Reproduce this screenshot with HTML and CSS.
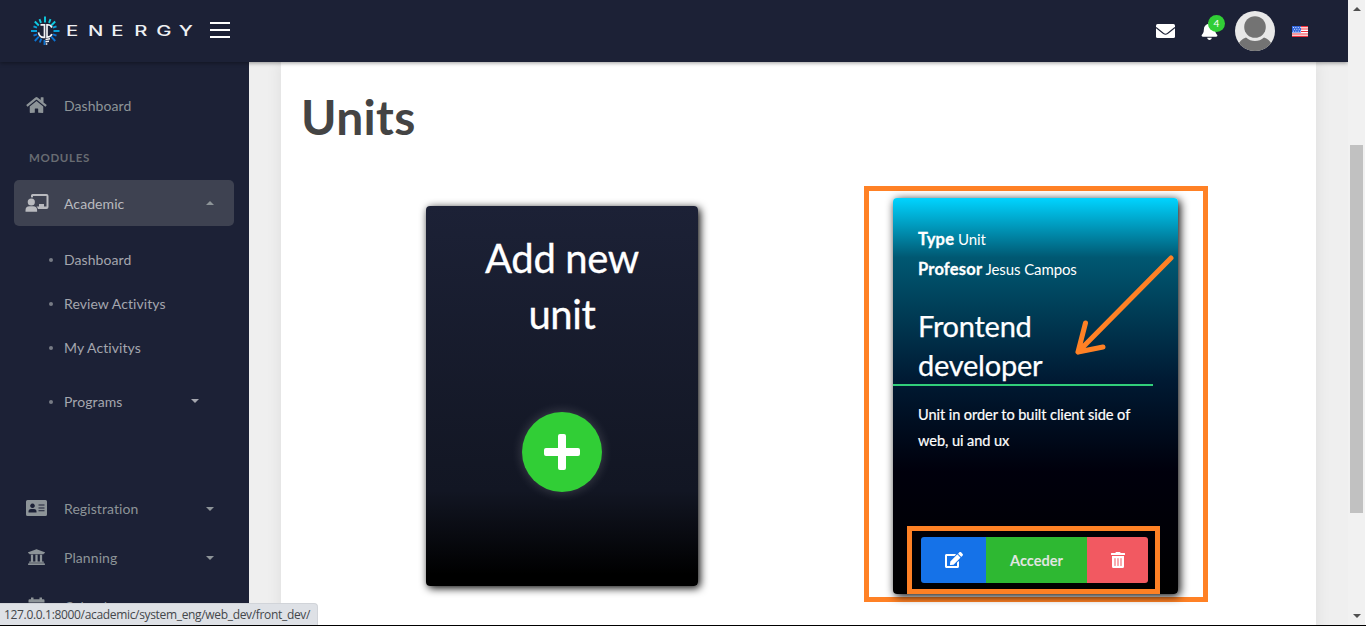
FILE: index.html
```
<!DOCTYPE html>
<html lang="en">
<head>
<meta charset="utf-8">
<title>Units</title>
<link rel="stylesheet" href="styles.css">
</head>
<body>
<div class="screen">
  <div class="page">
    <header class="topbar">
      <svg class="bulb" viewBox="0 0 30 30" fill="none">
        <g stroke="#0fcbe0" stroke-width="1.900"><path d="M15 .5v6M9.500 3.200l1.500 3.600M20.500 3.200l-1.500 3.600M4.800 5.500l4 4M25.200 5.500l-4 4"/></g>
        <g stroke="#0aa0d8" stroke-width="1.900"><path d="M1 15h6M23.500 15h6M3.500 10.300l3.500 1.400M26.500 10.300l-3.500 1.400"/></g>
        <g stroke="#0b72d2" stroke-width="1.900"><path d="M3.500 19.700l3.500-1.400M26.500 19.700l-3.500-1.400M4.800 25l4-4.300M25.200 25l-4-4.300M9.800 26.500l1.500-3.800M14.500 29v-5"/></g>
        <path stroke="#f1f2f5" stroke-width="1.700" d="M10.500 8.800h4v12.500q-5 .5-6-5M22 11.500Q20.500 8.500 17 8.800v12.400q3.500 0 5-3"/>
        <path stroke="#f1f2f5" stroke-width="1.500" d="M15.500 23.400l4.500-.6M15.500 25.800l3.500-.6M15.800 28h1.500"/>
      </svg>
      <svg class="wordmark" viewBox="0 0 128 14"><text transform="scale(1.450 1)" y="12" x="0 15.100 31.300 47 62.200 77.800">ENERGY</text></svg>
      <div class="burger"><i></i><i></i><i></i></div>
      <div class="tools">
        <svg class="mail" viewBox="0 0 19 14"><rect width="19" height="14" rx="1.500" fill="#fff"/><path d="M0 3.500l7.500 6q2 1.400 4 0l7.500-6" fill="none" stroke="#1c2136" stroke-width="1.100"/></svg>
        <div class="bell">
          <svg viewBox="0 0 448 512"><path fill="#fff" d="M224 512c35.320 0 63.970-28.650 63.970-64H160.030c0 35.350 28.650 64 63.970 64zm215.390-149.710c-19.320-20.760-55.470-51.990-55.470-154.290 0-77.700-54.480-139.900-127.940-155.160V32c0-17.670-14.320-32-31.980-32s-31.980 14.330-31.980 32v20.840C118.560 68.100 64.080 130.300 64.080 208c0 102.300-36.150 133.530-55.470 154.290-6 6.450-8.660 14.160-8.610 21.710.11 16.400 12.980 32 32.100 32h383.800c19.120 0 32-15.600 32.100-32 .05-7.550-2.610-15.270-8.610-21.710z"/></svg>
          <span class="badge">4</span>
        </div>
        <svg class="avatar" viewBox="0 0 40 40"><clipPath id="round"><circle cx="20" cy="20" r="20"/></clipPath><g clip-path="url(#round)"><path fill="#e8e8e8" d="M0 0h40v40H0z"/><circle cx="20" cy="16" r="10.800" fill="#737373"/><path fill="#737373" d="M2 36q3-8 9-9.500 4 3.500 9 3.500t9-3.500q6 1.500 9 9.500v6H2z"/></g></svg>
        <svg class="flag" viewBox="0 0 16 11"><path fill="#fff" d="M0 0h16v11H0z"/><path stroke="#f0303c" stroke-width="1.200" d="M0 .6h16M0 3h16M0 5.500h16M0 8h16M0 10.400h16"/><path fill="#3266dc" d="M0 0h9v6.500H0z"/><path stroke="#fff" stroke-width=".9" stroke-dasharray=".9 1.500" d="M1 1.500h8M2 3.300h7M1 5.200h8"/></svg>
      </div>
    </header>
    <div class="columns">
      <nav class="sidebar">
        <a class="item home">
          <svg class="icon" viewBox="0 0 576 512"><path d="M280.370 148.260L96 300.110V464a16 16 0 0 0 16 16l112.060-.29a16 16 0 0 0 15.920-16V368a16 16 0 0 1 16-16h64a16 16 0 0 1 16 16v95.640a16 16 0 0 0 16 16.050L464 480a16 16 0 0 0 16-16V300L295.670 148.260a12.190 12.190 0 0 0-15.300 0zM571.600 251.470L488 182.560V44.050a12 12 0 0 0-12-12h-56a12 12 0 0 0-12 12v72.610L318.470 43a48 48 0 0 0-61 0L4.340 251.470a12 12 0 0 0-1.600 16.900l25.500 31A12 12 0 0 0 45.150 301l235.220-193.740a12.190 12.190 0 0 1 15.300 0L530.900 301a12 12 0 0 0 16.900-1.600l25.500-31a12 12 0 0 0-1.700-16.930z"/></svg>
          <span>Dashboard</span>
        </a>
        <div class="group">MODULES</div>
        <a class="item active">
          <svg class="icon board" viewBox="0 0 24 20"><circle cx="6.300" cy="9" r="3.600"/><path d="M.5 18.800v-1.500q0-4 4-4h3.600q4 0 4 4v1.500zM6 4V2.500Q6 1 7.500 1h14Q23.500 1 23.500 3v11q0 2-2 2H13q-.5-1.800-1.500-2.500H14v-2.500h5v2.500h2.500V3H8v1.500q-1-.4-2 0z"/></svg>
          <span>Academic</span><i class="caret up"></i>
        </a>
        <div class="submenu">
          <a class="sub"><span>Dashboard</span></a>
          <a class="sub"><span>Review Activitys</span></a>
          <a class="sub"><span>My Activitys</span></a>
          <a class="sub programs"><span>Programs</span><i class="caret"></i></a>
        </div>
        <a class="item">
          <svg class="icon" viewBox="0 0 21 18"><path fill-rule="evenodd" d="M1.500 1h18Q21 1 21 2.500v13q0 1.500-1.500 1.500h-18Q0 17 0 15.500v-13Q0 1 1.500 1zM6.500 4.500a2.300 2.300 0 1 0 .01 0zM2.500 13.500h8v-1q0-2.500-2.500-2.500H5q-2.500 0-2.500 2.500zM12.500 5.500v1h6v-1zm0 3v1h6v-1zm0 2.700v1h6v-1z"/></svg>
          <span>Registration</span><i class="caret"></i>
        </a>
        <a class="item">
          <svg class="icon" viewBox="0 0 512 512"><path d="M496 128v16a8 8 0 0 1-8 8h-24v12c0 6.627-5.373 12-12 12H60c-6.627 0-12-5.373-12-12v-12H24a8 8 0 0 1-8-8v-16a8 8 0 0 1 4.941-7.392l232-88a7.996 7.996 0 0 1 6.118 0l232 88A8 8 0 0 1 496 128zm-24 304H40c-13.255 0-24 10.745-24 24v16a8 8 0 0 0 8 8h464a8 8 0 0 0 8-8v-16c0-13.255-10.745-24-24-24zM96 192v192H60c-6.627 0-12 5.373-12 12v20h416v-20c0-6.627-5.373-12-12-12h-36V192h-64v192h-64V192h-64v192h-64V192H96z"/></svg>
          <span>Planning</span><i class="caret"></i>
        </a>
        <a class="item">
          <svg class="icon" viewBox="0 0 18 18"><path d="M3.500 2.200V.5H6v1.700h6V.5h2.500v1.700H16q1 0 1 1V5.500H1V3.200q0-1 1-1zM1 6.500h16v10H1z"/></svg>
          <span>Calendar</span>
        </a>
      </nav>
      <main class="main">
        <section class="panel">
          <h1>Units</h1>
          <div class="cards">
            <article class="card add">
              <h2>Add new<br>unit</h2>
              <div class="plus"><svg viewBox="0 0 36 36"><path fill="#fff" d="M16 0h4q2 0 2 2v12h12q2 0 2 2v4q0 2-2 2H22v12q0 2-2 2h-4q-2 0-2-2V22H2q-2 0-2-2v-4q0-2 2-2h12V2q0-2 2-2z"/></svg></div>
            </article>
            <div class="highlight">
              <article class="card unit">
                <p class="meta"><b>Type</b> Unit</p>
                <p class="meta"><b>Profesor</b> Jesus Campos</p>
                <h3>Frontend<br>developer</h3>
                <p class="about">Unit in order to built client side of<br>web, ui and ux</p>
                <div class="actions">
                  <div class="btn edit"><svg viewBox="0 0 576 512"><path d="M402.600 83.200l90.200 90.200c3.800 3.800 3.800 10 0 13.800L274.400 405.600l-92.800 10.300c-12.400 1.400-22.900-9.100-21.500-21.500l10.300-92.800L388.800 83.200c3.800-3.800 10-3.800 13.800 0zm162-22.900l-48.800-48.800c-15.200-15.200-39.900-15.200-55.200 0l-35.400 35.400c-3.800 3.800-3.800 10 0 13.800l90.200 90.200c3.800 3.800 10 3.800 13.800 0l35.400-35.400c15.200-15.300 15.200-40 0-55.200zM384 346.200V448H64V128h229.800c3.200 0 6.200-1.300 8.500-3.500l40-40c7.600-7.600 2.200-20.500-8.500-20.500H48C21.500 64 0 85.500 0 112v352c0 26.500 21.500 48 48 48h352c26.500 0 48-21.500 48-48V306.200c0-10.700-12.900-16-20.500-8.500l-40 40c-2.200 2.300-3.500 5.300-3.500 8.500z"/></svg></div>
                  <div class="btn open">Acceder</div>
                  <div class="btn remove"><svg viewBox="0 0 448 512"><path d="M32 464a48 48 0 0 0 48 48h288a48 48 0 0 0 48-48V128H32zm272-256a16 16 0 0 1 32 0v224a16 16 0 0 1-32 0zm-96 0a16 16 0 0 1 32 0v224a16 16 0 0 1-32 0zm-96 0a16 16 0 0 1 32 0v224a16 16 0 0 1-32 0zM432 32H312l-9.400-18.700A24 24 0 0 0 281.100 0H166.800a23.720 23.720 0 0 0-21.400 13.300L136 32H16A16 16 0 0 0 0 48v32a16 16 0 0 0 16 16h416a16 16 0 0 0 16-16V48a16 16 0 0 0-16-16z"/></svg></div>
                </div>
              </article>
              <svg class="arrow" viewBox="0 0 100 104" fill="none" stroke="#ff8125" stroke-width="5" stroke-linecap="round" stroke-linejoin="round"><path d="M97 4L4 98M11.500 69L4 98l25-5"/></svg>
            </div>
          </div>
        </section>
      </main>
    </div>
  </div>
  <div class="scrollbar"><i class="step"></i><div class="thumb"></div><i class="step down"></i></div>
  <div class="status">127.0.0.1:8000/academic/system_eng/web_dev/front_dev/</div>
</div>
</body>
</html>
```
FILE: styles.css
```
* { box-sizing: border-box; }
body { margin: 0; font-family: Lato, sans-serif; font-variant-ligatures: none; background: #000; overflow: hidden; }
svg { display: block; flex: none; }
h1, h2, h3, p { margin: 0; }
.screen { position: relative; display: flex; width: 1366px; height: 625px; overflow: hidden; background: #fff; }
.page { width: 1348px; height: 625px; display: flex; flex-direction: column; overflow: hidden; }

.topbar { flex: none; height: 62px; background: #1c2136; display: flex; align-items: center; padding-left: 30px; z-index: 1; box-shadow: 0 1px 4px rgba(0,0,0,.4); }
.bulb { width: 30px; height: 30px; }
.wordmark { width: 128px; height: 14px; margin-left: 6px; overflow: visible; }
.wordmark text { font: 500 14px Inter, sans-serif; fill: #eef0f3; }
.burger { width: 20px; margin-left: 16px; margin-top: -2px; display: grid; gap: 5px; }
.burger i { height: 2px; background: #fff; }
.tools { margin-left: auto; margin-right: 40px; display: flex; align-items: center; }
.mail { width: 19px; height: 14px; margin-right: 26px; }
.bell { position: relative; margin-right: 17px; }
.bell svg { width: 17px; height: 18px; }
.badge { position: absolute; left: 7px; top: -7px; width: 17px; height: 17px; border-radius: 50%; background: #31ce36; color: #fff; font-size: 10px; line-height: 17px; text-align: center; }
.avatar { width: 40px; height: 40px; margin-right: 17px; }
.flag { width: 16px; height: 11px; }

.columns { flex: 1; display: flex; min-height: 0; }
.sidebar { width: 249px; height: 600px; flex: none; background: #1c2136; padding: 21px 15px 0 14px; color: #8d9498; font-size: 14px; letter-spacing: .08px; }
.item { height: 46px; margin-bottom: 3px; padding: 0 20px 0 12px; display: flex; align-items: center; border-radius: 5px; }
.icon { width: 21px; height: 18px; margin: -2px 17px 0 0; fill: #8d9498; }
.item span { line-height: 20px; }
.group { height: 48px; padding: 17px 0 0 15px; font-size: 11.500px; line-height: 18px; letter-spacing: .65px; font-weight: 700; color: #686c72; }
.active { width: 220px; background: #3e4251; color: #b9babf; margin: 0; }
.active span { padding-top: 2px; }
.active .icon { fill: #b9babf; }
.active .board { width: 24px; height: 20px; margin: 0 15px 0 -1px; }
.caret { margin-left: auto; margin-top: -1px; border: 4px solid transparent; border-top-color: currentColor; border-bottom: 0; }
.caret.up { border-top: 0; border-bottom: 4px solid #8d9498; }
.submenu { padding-top: 11px; height: 260px; color: #a4a6ae; }
.sub { height: 44px; display: flex; align-items: center; padding-left: 35px; }
.sub::before { content: ""; width: 4px; height: 4px; border-radius: 50%; background: #777b85; margin: 2px 11px 0 0; }
.programs { margin-top: 10px; padding-right: 35px; }

.main { flex: 1; background: #efefef; padding: 0 32px; }
.panel { width: 1035px; height: 600px; background: #fff; box-shadow: 0 0 15px rgba(0,0,0,.08); padding: 23px 20px 0; }
h1 { font-size: 48px; line-height: 64px; font-weight: 700; letter-spacing: .3px; color: #444; }
.cards { display: flex; align-items: flex-start; margin-top: 37px; padding-left: 125px; }
.card { border-radius: 4px; color: #fff; }
.add { width: 272px; height: 380px; margin-top: 20px; padding-top: 24px; display: flex; flex-direction: column; align-items: center; background: linear-gradient(#1c2136, #121623 75%, #000 97%); box-shadow: 2px 2px 9px #000; }
.add h2 { font-size: 40px; line-height: 56px; font-weight: 400; letter-spacing: -.35px; text-align: center; -webkit-text-stroke: .3px #fff; }
.plus { width: 80px; height: 80px; margin-top: 70px; border-radius: 50%; background: #31ce36; box-shadow: 0 0 12px rgba(255,255,255,.2); display: grid; place-items: center; }
.plus svg { width: 36px; height: 36px; }
.highlight { position: relative; width: 344px; height: 416px; margin-left: 166px; border: 5px solid #ff8125; padding: 7px 0 0 24px; }
.unit { width: 285px; height: 396px; padding: 26px 0 0 25px; background: linear-gradient(#00d4ff, #005872 15%, #001a33 46%, #00000c 69%, #000); box-shadow: 2px 2px 10px #000; }
.meta { height: 30px; font-size: 15px; line-height: 30px; letter-spacing: -.1px; white-space: nowrap; }
.meta b { font-size: 16.500px; letter-spacing: .2px; -webkit-text-stroke: .3px #fff; }
.unit h3 { width: 260px; height: 102px; margin-left: -25px; padding: 22px 0 0 25px; border-bottom: 2px solid #31ce7a; font-size: 29px; line-height: 39px; letter-spacing: -.25px; font-weight: 400; -webkit-text-stroke: .25px #fff; }
.about { margin-top: 16px; font-size: 14.600px; line-height: 26px; letter-spacing: -.08px; -webkit-text-stroke: .2px #fff; }
.actions { width: 253px; height: 68px; margin: 72px 0 0 -11px; border: 5px solid #ff8125; padding: 6px 7px 5px 9px; display: flex; }
.btn { height: 46px; display: grid; place-items: center; font-size: 14.600px; font-weight: 700; color: #e0e5e0; }
.btn svg { height: 16px; fill: #fff; }
.edit { width: 65px; background: #1572e8; border-radius: 3px 0 0 3px; }
.open { width: 101px; background: #2eb832; }
.remove { flex: 1; background: #f25961; border-radius: 0 3px 3px 0; }
.arrow { position: absolute; left: 205px; top: 63px; width: 100px; height: 104px; }

.scrollbar { width: 17px; background: #f1f1f1; display: flex; flex-direction: column; align-items: center; padding: 7px 0 7px; }
.step { border: 4px solid transparent; border-top: 0; border-bottom-color: #505050; }
.step.down { transform: rotate(180deg); margin-top: auto; }
.thumb { width: 13px; height: 368px; margin-top: 134px; background: #c1c1c1; }
.status { position: absolute; left: 0; bottom: 0; z-index: 2; width: 318px; height: 22px; padding-left: 4px; background: #dee1e6; border: 1px solid #d1d4d9; border-width: 1px 1px 0 0; border-radius: 0 4px 0 0; font: 12px/21px "Open Sans", sans-serif; letter-spacing: -.33px; color: #44474b; white-space: nowrap; }
```
